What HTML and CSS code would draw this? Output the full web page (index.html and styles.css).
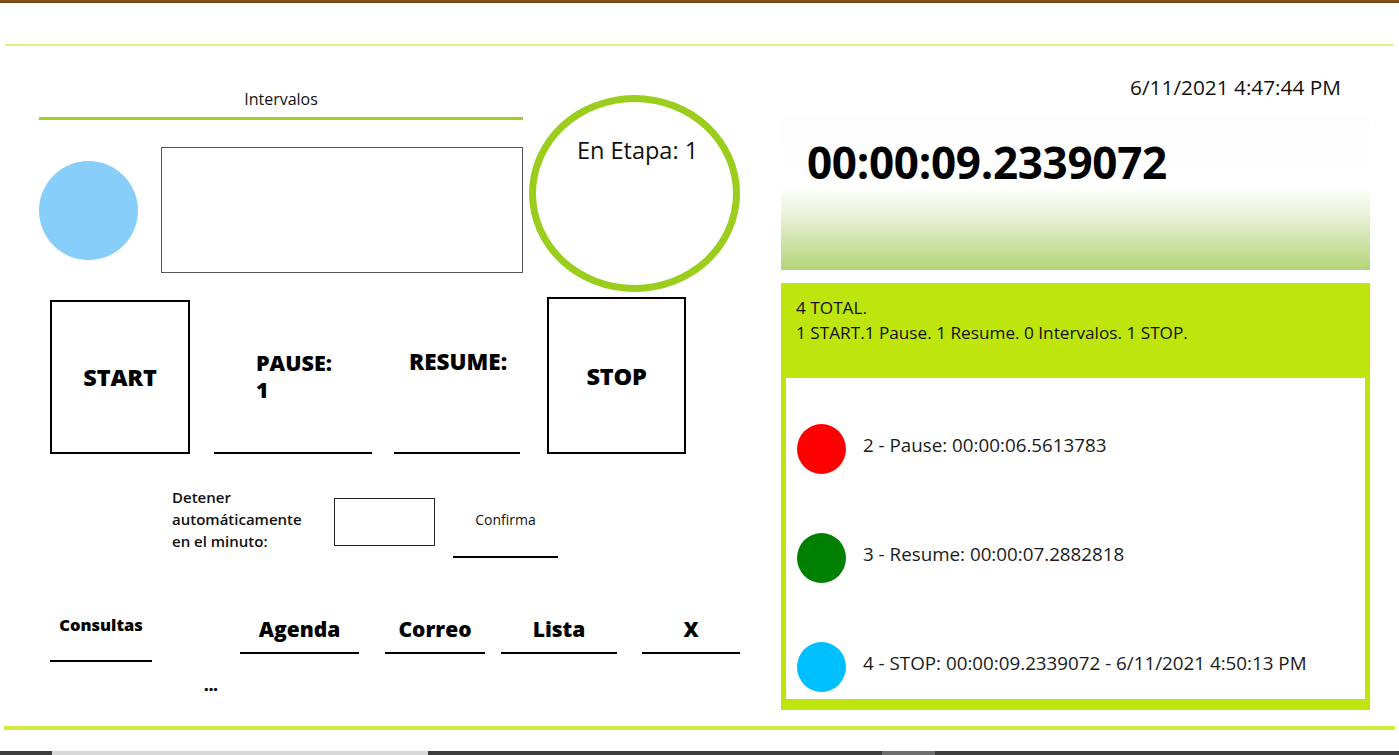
FILE: index.html
```html
<!DOCTYPE html>
<html lang="es">
<head>
<meta charset="utf-8">
<title>Cronómetro</title>
<link rel="stylesheet" href="styles.css">
</head>
<body>
<div class="topbar"></div>
<div class="header"></div>
<div class="rule"></div>
<main class="main">
  <section class="left">
    <div class="top">
      <div class="intervals">
        <div class="int-title">Intervalos</div>
        <div class="int-line"></div>
        <div class="int-row">
          <div class="dot-blue"></div>
          <div class="int-box"></div>
        </div>
      </div>
      <div class="ring"><span>En Etapa: 1</span></div>
    </div>
    <div class="controls">
      <div class="btn-box start">START</div>
      <div class="count pause"><div>PAUSE:</div><div>1</div></div>
      <div class="count resume"><div>RESUME:</div></div>
      <div class="btn-box stop">STOP</div>
    </div>
    <div class="auto">
      <div class="auto-label">Detener<br>automáticamente<br>en el minuto:</div>
      <div class="auto-input"></div>
      <div class="confirm">Confirma</div>
    </div>
    <nav class="nav">
      <div class="nav-item consultas">Consultas</div>
      <div class="nav-item agenda">Agenda</div>
      <div class="nav-item correo">Correo</div>
      <div class="nav-item lista">Lista</div>
      <div class="nav-item close">X</div>
    </nav>
    <div class="more">...</div>
  </section>
  <section class="right">
    <div class="date">6/11/2021 4:47:44 PM</div>
    <div class="timer">00:00:09.2339072</div>
    <div class="stats">
      <div class="stats-head">
        <div>4 TOTAL.</div>
        <div>1 START.1 Pause. 1 Resume. 0 Intervalos. 1 STOP.</div>
      </div>
      <div class="stats-list">
        <div class="event"><span class="ev-dot red"></span><span class="ev-text">2 - Pause: 00:00:06.5613783</span></div>
        <div class="event"><span class="ev-dot green"></span><span class="ev-text">3 - Resume: 00:00:07.2882818</span></div>
        <div class="event"><span class="ev-dot blue"></span><span class="ev-text">4 - STOP: 00:00:09.2339072 - 6/11/2021 4:50:13 PM</span></div>
      </div>
    </div>
  </section>
</main>
<div class="footer-line"></div>
<div class="spacer"></div>
<div class="scrollbar">
  <div class="sb-dark sb-1"></div>
  <div class="sb-light"></div>
  <div class="sb-dark sb-2"></div>
  <div class="sb-mid"></div>
  <div class="sb-dark sb-3"></div>
</div>
</body>
</html>
```
FILE: styles.css
```css
* { box-sizing: border-box; }
html, body { margin: 0; padding: 0; }
body {
  width: 1399px;
  height: 755px;
  overflow: hidden;
  background: #fff;
  font-family: "Open Sans", "Noto Sans", "Liberation Sans", sans-serif;
  color: #000;
}
.topbar { height: 3px; background: linear-gradient(#8a5418, #6e3f0c); }
.header { height: 41px; }
.rule { height: 2px; margin: 0 6px 0 5px; background: #dcf27c; }

.main { display: flex; height: 680px; }
.left { width: 770px; padding-left: 39px; }
.right { width: 629px; padding-left: 11px; }

.top { display: flex; align-items: flex-start; }
.intervals { width: 484px; }
.int-title { margin-top: 43px; font-size: 16px; line-height: 20px; text-align: center; color: #111; }
.int-line { margin-top: 8px; height: 3px; background: #9fd024; }
.int-row { margin-top: 27px; display: flex; align-items: center; gap: 23px; }
.dot-blue { width: 99px; height: 99px; border-radius: 50%; background: #87cefa; }
.int-box { width: 362px; height: 126px; border: 1px solid #555; }
.ring {
  margin-top: 49px; margin-left: 6px;
  width: 211px; height: 197px;
  border: 7px solid #9bcd1c; border-radius: 50%;
  padding-top: 33px; text-align: center;
  font-size: 23.5px; line-height: 30px; color: #111;
}
.ring span { padding-left: 6px; }

.controls { display: flex; align-items: flex-end; margin-top: 5px; }
.btn-box {
  display: flex; align-items: center; justify-content: center;
  border: 2px solid #000;
  font-size: 23.5px; font-weight: 800; letter-spacing: -0.2px;
}
.start { margin-left: 11px; width: 140px; height: 154px; }
.stop { margin-left: 27px; width: 139px; height: 157px; }
.count {
  height: 154px; border-bottom: 2px solid #000;
  font-size: 21.5px; font-weight: 800; line-height: 27px;
}
.pause { margin-left: 24px; width: 158px; padding: 49px 0 0 42px; }
.resume { margin-left: 22px; width: 126px; padding: 48px 0 0 15px; font-size: 22.5px; }

.auto { display: flex; align-items: flex-start; }
.auto-label { margin: 32px 0 0 133px; font-size: 15px; font-weight: 600; line-height: 22px; color: #111; width: 130px; white-space: nowrap; }
.auto-input { margin: 44px 0 0 32px; width: 101px; height: 48px; border: 1px solid #222; }
.confirm {
  margin: 56px 0 0 18px; width: 105px;
  font-size: 14px; line-height: 20px; text-align: center; color: #111;
  padding-bottom: 26px; border-bottom: 2px solid #000;
}

.nav { display: flex; align-items: flex-start; }
.nav-item { text-align: center; font-weight: 800; border-bottom: 2px solid #000; }
.consultas { margin: 55px 0 0 11px; width: 102px; font-size: 16.5px; line-height: 24px; padding-bottom: 23px; }
.agenda, .correo, .lista, .close { margin-top: 57px; font-size: 21px; line-height: 28px; padding-bottom: 9px; }
.agenda { margin-left: 88px; width: 119px; }
.correo { margin-left: 26px; width: 100px; }
.lista { margin-left: 16px; width: 116px; }
.close { margin-left: 25px; width: 98px; }
.more { margin: 13px 0 0 165px; font-size: 16px; font-weight: 800; line-height: 20px; }

.date { margin-top: 28px; width: 589px; padding-right: 29px; text-align: right; font-size: 20.8px; line-height: 26px; color: #111; }
.timer {
  margin-top: 18px; width: 589px; height: 152px;
  padding: 16px 0 0 26px;
  font-size: 44px; font-weight: 700; line-height: 56px; letter-spacing: -0.3px;
  background: linear-gradient(#fdfdfd 0%, #ffffff 45%, #e8f1d6 65%, #b3d478 100%);
}
.stats { margin-top: 13px; width: 589px; height: 427px; background: #bee60e; padding: 0 5px 11px; }
.stats-head { height: 95px; padding: 12px 10px 0; font-size: 17.2px; line-height: 25px; color: #111; }
.stats-list { height: 321px; background: #fff; padding: 46px 0 0 11px; display: flex; flex-direction: column; gap: 59px; }
.event { display: flex; align-items: center; height: 50px; }
.ev-dot { width: 49px; height: 50px; border-radius: 50%; flex: none; }
.ev-dot.red { background: #ff0000; }
.ev-dot.green { background: #008000; }
.ev-dot.blue { background: #00bfff; }
.ev-text { margin-left: 17px; padding-bottom: 9px; font-size: 18.8px; line-height: 24px; color: #1a1a1a; }

.footer-line { height: 4px; margin: 0 4px; background: #cdee3c; }
.spacer { height: 21px; }
.scrollbar { display: flex; height: 4px; }
.sb-dark { background: #3c3c3c; }
.sb-1 { width: 52px; }
.sb-light { width: 376px; background: #d8d8d8; }
.sb-2 { width: 454px; }
.sb-mid { width: 53px; background: #6e6e6e; }
.sb-3 { flex: 1; }
```
